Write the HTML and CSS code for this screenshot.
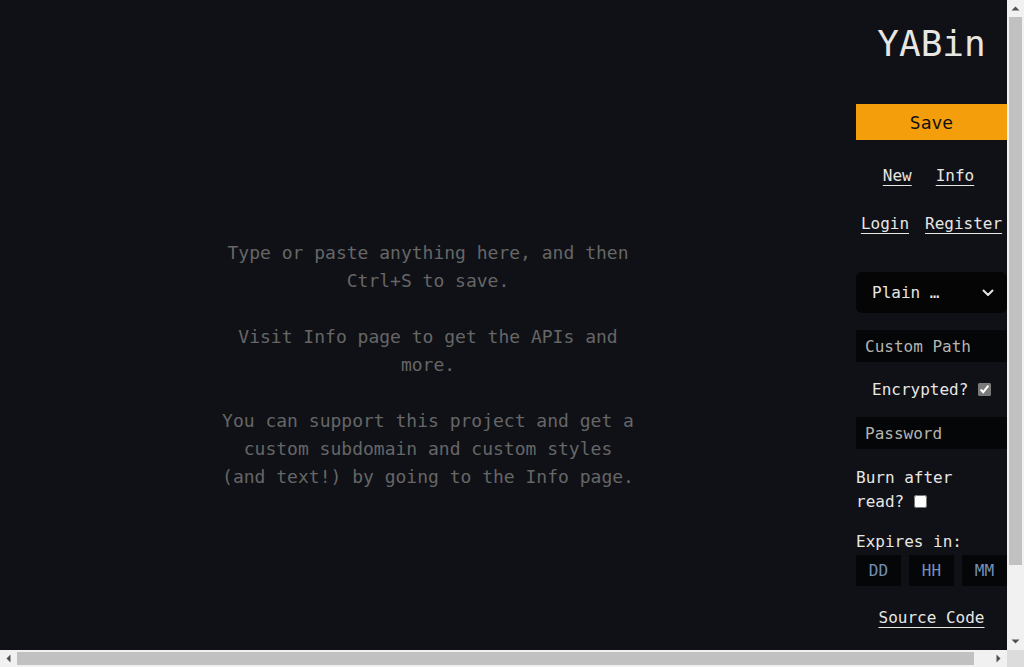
FILE: index.html
```html
<!DOCTYPE html>
<html lang="en">
<head>
    <meta charset="UTF-8">
    <meta name="viewport" content="width=device-width, initial-scale=1.0">
    <title>YABin</title>
    <link rel="stylesheet" href="styles.css">
</head>
<body>
    <div class="frame">
        <div class="viewport">
            <div class="page">
                <main class="editor">
                    <textarea class="paste" spellcheck="false" placeholder="Type or paste anything here, and then Ctrl+S to save.&#10;&#10;Visit Info page to get the APIs and more.&#10;&#10;You can support this project and get a custom subdomain and custom styles (and text!) by going to the Info page."></textarea>
                </main>

                <aside class="side">
                    <h1 class="logo">YABin</h1>
                    <button class="save-btn">Save</button>

                    <div class="links links-top">
                        <a href="#">New</a>
                        <a href="#">Info</a>
                    </div>
                    <div class="links links-tight">
                        <a href="#">Login</a>
                        <a href="#">Register</a>
                    </div>

                    <!-- ngôn ngữ -->
                    <div class="select-wrap">
                        <select class="lang">
                            <option>Plain Text</option>
                            <option>JavaScript</option>
                            <option>Python</option>
                        </select>
                        <svg class="chevron" width="12" height="8" viewBox="0 0 12 8"><polyline points="1.5,1.5 6,6 10.5,1.5" fill="none" stroke="#e8e6e3" stroke-width="2" stroke-linecap="round" stroke-linejoin="round"/></svg>
                    </div>

                    <input class="field path" type="text" placeholder="Custom Path">
                    <label class="check check-center">Encrypted? <input type="checkbox" checked></label>
                    <input class="field pass" type="password" placeholder="Password">
                    <label class="check burn">Burn after read? <input type="checkbox"></label>

                    <div class="expires">
                        <div class="expires-label">Expires in:</div>
                        <div class="expires-row">
                            <input class="time" type="text" placeholder="DD">
                            <input class="time" type="text" placeholder="HH">
                            <input class="time" type="text" placeholder="MM">
                        </div>
                    </div>

                    <a class="source" href="#">Source Code</a>
                </aside>
            </div>
        </div>

        <!-- thanh cuộn -->
        <div class="vbar">
            <div class="sb-btn"><svg width="9" height="5" viewBox="0 0 9 5"><polygon points="0.5,4.5 4.5,0.5 8.5,4.5" fill="#505050"/></svg></div>
            <div class="sb-track"><div class="sb-thumb vthumb"></div></div>
            <div class="sb-btn"><svg width="9" height="5" viewBox="0 0 9 5"><polygon points="0.5,0.5 8.5,0.5 4.5,4.5" fill="#505050"/></svg></div>
        </div>
        <div class="hbar">
            <div class="sb-btn"><svg width="5" height="9" viewBox="0 0 5 9"><polygon points="4.5,0.5 4.5,8.5 0.5,4.5" fill="#505050"/></svg></div>
            <div class="sb-track"><div class="sb-thumb hthumb"></div></div>
            <div class="sb-btn"><svg width="5" height="9" viewBox="0 0 5 9"><polygon points="0.5,0.5 4.5,4.5 0.5,8.5" fill="#505050"/></svg></div>
        </div>
        <div class="corner"></div>
    </div>
</body>
</html>
```

FILE: styles.css
```css
body { margin: 0; overflow: hidden; background: #0f1116; color: #e8e6e3; font-family: "DejaVu Sans Mono", "Liberation Mono", monospace; font-size: 16px; }

.frame { display: grid; grid-template-columns: 1fr 17px; grid-template-rows: 1fr 17px; height: 100vh; }
.viewport { overflow: hidden; min-width: 0; min-height: 0; }
.vbar, .hbar { display: flex; background: #f1f1f1; }
.vbar { flex-direction: column; }
.sb-btn { width: 17px; height: 17px; flex-shrink: 0; display: flex; align-items: center; justify-content: center; }
.sb-track { flex: 1; display: flex; }
.vbar .sb-track { flex-direction: column; padding: 0 2px; }
.hbar .sb-track { padding: 2px 0; }
.sb-thumb { background: #c1c1c1; }
.vthumb { height: 548px; }
.hthumb { width: 957px; }
.corner { background: #dcdcdc; }

.page { display: flex; min-height: 734px; }
.editor { flex: 1; }
.paste { display: block; width: 100%; height: 734px; box-sizing: border-box; padding: 239px calc(50% - 208px) 0; background: transparent; border: none; outline: none; resize: none; color: #e8e6e3; font-family: inherit; font-size: 18px; line-height: 28px; text-align: center; }
.paste::placeholder { color: #666; }

.side { width: 151px; flex-shrink: 0; display: flex; flex-direction: column; }
.logo { margin: 23px 0 0; font-size: 36px; font-weight: normal; line-height: normal; text-align: center; }
.save-btn { margin-top: 40px; height: 36px; width: 151px; border: none; background: #f59e0b; color: #111; font-family: inherit; font-size: 18px; cursor: pointer; }

.links { display: flex; justify-content: center; gap: 24px; margin-top: 24px; line-height: 24px; }
.links-top { padding-right: 6px; }
.links-tight { gap: 16px; margin-top: 24px; }
a { color: #e8e6e3; text-underline-offset: 4px; }

.select-wrap { position: relative; margin-top: 36px; }
.lang { display: block; width: 151px; height: 41px; padding: 0 58px 0 16px; appearance: none; border: none; border-radius: 6px; background: #050505; color: #e8e6e3; font-family: inherit; font-size: 16px; text-overflow: ellipsis; outline: none; }
.chevron { position: absolute; right: 13px; top: 17px; pointer-events: none; }

.field { width: 100%; height: 32px; padding: 0 9px; margin: 0; border: none; background: #050608; color: #e8e6e3; font-family: inherit; font-size: 16px; outline: none; }
.field::placeholder { color: #b5b5b0; }
.path { margin-top: 17px; }
.pass { margin-top: 15px; }

.check { line-height: 24px; }
.check input { margin: 0; width: 13px; height: 13px; vertical-align: -1px; accent-color: #7a7a7a; }
.check-center { text-align: center; margin-top: 16px; }
.burn { margin-top: 17px; }

.expires { margin-top: 16px; }
.expires-label { line-height: 24px; }
.expires-row { display: flex; gap: 8px; margin-top: 1px; }
.time { width: 0; flex: 1; height: 31px; padding: 0; border: none; background: #050608; color: #e8e6e3; font-family: inherit; font-size: 16px; text-align: center; outline: none; }
.time::placeholder { color: #7391b8; }

.source { align-self: center; margin-top: 20px; line-height: 24px; }
```
